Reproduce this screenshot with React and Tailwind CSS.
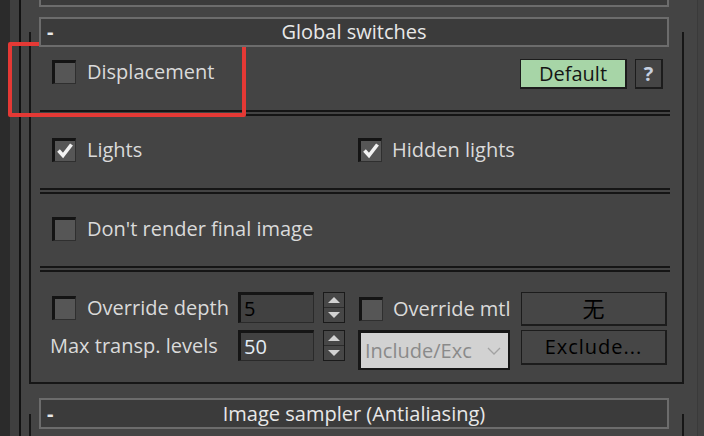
import React from 'react';

// little sunken checkbox like the 3ds Max one
const CheckBox = ({ checked }) => (
    <span className="flex h-[24px] w-[24px] shrink-0 items-center justify-center border-t-[3px] border-l-[3px] border-r border-b border-t-[#141414] border-l-[#141414] border-r-[#2f2f2f] border-b-[#2f2f2f] bg-[#565656]">
        {checked && (
            <svg width="18" height="18" viewBox="0 0 18 18">
                <path d="M2.5 8.5 L7 13.5 L15.5 2.5" fill="none" stroke="#f2f2f2" strokeWidth="3.6" strokeLinejoin="miter" />
            </svg>
        )}
    </span>
);

const Field = ({ value, dim }) => (
    <div
        className={
            'flex h-[31px] w-[76px] items-center border-t-[3px] border-l-[3px] border-r border-b border-t-[#151515] border-l-[#151515] border-r-[#2a2a2a] border-b-[#2a2a2a] bg-[#414141] pl-[3px] ' +
            (dim ? 'font-medium text-black' : 'text-[#e4ecf4]')
        }
    >
        {value}
    </div>
);

const Spinner = () => (
    <div className="ml-[9px] flex h-[31px] w-[22px] flex-col border border-[#1a1a1a] bg-[#474747]">
        <div className="flex flex-1 items-center justify-center border-b border-[#2c2c2c]">
            <svg width="12" height="6" viewBox="0 0 12 6">
                <path d="M0 6 L6 0 L12 6 Z" fill="#d2d2d2" />
            </svg>
        </div>
        <div className="flex flex-1 items-center justify-center">
            <svg width="12" height="6" viewBox="0 0 12 6">
                <path d="M0 0 L12 0 L6 6 Z" fill="#d2d2d2" />
            </svg>
        </div>
    </div>
);

const Header = ({ title, tall }) => (
    <div
        className={
            'relative z-10 ml-[10px] mr-[15px] grid shrink-0 grid-cols-[1fr_auto_1fr] items-center border-2 border-[#6c6c6c] bg-[#3b3b3b] text-[#e8e8e8] ' +
            (tall ? 'h-[31px]' : 'h-[30px]')
        }
    >
        <span className="pl-[6px] font-bold leading-none">-</span>
        <span className="leading-none">{title}</span>
        <span />
    </div>
);

const Separator = () => <div className="ml-[9px] mr-[12px] h-[6px] shrink-0 border-y-2 border-[#151515]" />;

export default function App() {
    return (
        <div className="relative flex h-[436px] w-[704px] overflow-hidden bg-[#444444] font-['Open_Sans','Noto_Sans_CJK_SC',sans-serif] text-[20px] text-[#dadada]">
            <div className="w-[10px] shrink-0 bg-[#2b2b2b]" />
            <div className="w-[9px] shrink-0 bg-[#3f3f3f]" />
            <div className="flex w-[678px] shrink-0 flex-col overflow-hidden border-l-2 border-[#121212] pl-[8px] pr-[13px]">
                {/* previous (closed) rollout */}
                <div className="ml-[10px] mr-[15px] h-[7px] shrink-0 border-x-2 border-b-2 border-[#6c6c6c] bg-[#3b3b3b]" />

                {/* Global switches */}
                <div className="mt-[10px] flex shrink-0 flex-col">
                    <Header title="Global switches" />
                    <div className="-mt-[15px] flex flex-col border-x-2 border-b-2 border-[#161616] pt-[15px]">
                        <div className="flex h-[63px] shrink-0 items-start pt-[12px] pl-[21px] pr-[19px]">
                            <div className="mt-[1px] flex h-[24px] items-center">
                                <CheckBox />
                                <span className="ml-[11px] whitespace-nowrap">Displacement</span>
                            </div>
                            <button className="ml-auto flex h-[30px] w-[107px] items-center justify-center border border-r-2 border-b-2 border-[#1c1c1c] bg-[#a7d5a7] text-[#151515]">
                                Default
                            </button>
                            <button className="ml-[8px] flex h-[30px] w-[28px] items-center justify-center border border-r-2 border-b-2 border-[#1c1c1c] bg-[#454545] font-bold text-[#c6d0e0]">
                                ?
                            </button>
                        </div>
                        <Separator />
                        <div className="flex h-[72px] shrink-0 items-start pt-[22px] pl-[21px]">
                            <div className="flex h-[24px] w-[306px] items-center">
                                <CheckBox checked />
                                <span className="ml-[11px]">Lights</span>
                            </div>
                            <div className="flex h-[24px] items-center">
                                <CheckBox checked />
                                <span className="ml-[10px]">Hidden lights</span>
                            </div>
                        </div>
                        <Separator />
                        <div className="flex h-[72px] shrink-0 items-start pt-[23px] pl-[21px]">
                            <div className="flex h-[24px] items-center">
                                <CheckBox />
                                <span className="ml-[11px]">Don't render final image</span>
                            </div>
                        </div>
                        <Separator />
                        <div className="flex h-[110px] shrink-0 items-start pt-[20px] pl-[19px]">
                            <div className="flex flex-col gap-[7px]">
                                <div className="flex items-center">
                                    <div className="flex w-[188px] items-center pl-[2px]">
                                        <CheckBox />
                                        <span className="ml-[11px] whitespace-nowrap">Override depth</span>
                                    </div>
                                    <Field value="5" dim />
                                    <Spinner />
                                </div>
                                <div className="flex items-center">
                                    <div className="w-[188px] whitespace-nowrap">Max transp. levels</div>
                                    <Field value="50" />
                                    <Spinner />
                                </div>
                            </div>
                            <div className="ml-[13px] flex flex-col gap-[4px]">
                                <div className="flex">
                                    <div className="flex h-[34px] w-[152px] items-center overflow-hidden pl-[1px]">
                                        <CheckBox />
                                        <span className="ml-[10px] whitespace-nowrap">Override mtl</span>
                                    </div>
                                    <button className="ml-[11px] flex h-[34px] w-[146px] items-center justify-center border border-r-2 border-b-2 border-[#1c1c1c] bg-[#464646] text-[22px] text-black">
                                        无
                                    </button>
                                </div>
                                <div className="flex items-start">
                                    <div className="flex h-[40px] w-[152px] items-center border-t-[3px] border-l-[3px] border-r-2 border-b-2 border-[#171717] bg-[#d2d2d2] pl-[4px] text-[#8a8a8a]">
                                        <span className="w-[107px] overflow-hidden whitespace-nowrap">Include/Exclude</span>
                                        <svg className="ml-[15px]" width="14" height="8" viewBox="0 0 14 8">
                                            <path d="M1 1 L7 7 L13 1" fill="none" stroke="#a2a2a2" strokeWidth="1.3" />
                                        </svg>
                                    </div>
                                    <button className="ml-[11px] flex h-[35px] w-[146px] items-center justify-center border border-r-2 border-b-2 border-[#1c1c1c] bg-[#464646] font-medium tracking-[1px] text-black">
                                        Exclude...
                                    </button>
                                </div>
                            </div>
                        </div>
                    </div>
                </div>

                {/* Image sampler */}
                <div className="mt-[14px] flex shrink-0 flex-col">
                    <Header title="Image sampler (Antialiasing)" tall />
                    <div className="-mt-[15px] h-[40px] shrink-0 border-x-2 border-[#161616]" />
                </div>
            </div>
            <div className="w-[7px] shrink-0 border-l border-[#3a3a3a] bg-[#424242]" />

            {/* red highlight annotation */}
            <div className="pointer-events-none absolute left-[8px] top-[42px] h-[75px] w-[238px] rounded-[2px] border-4 border-[#e53935]" />
        </div>
    );
}
